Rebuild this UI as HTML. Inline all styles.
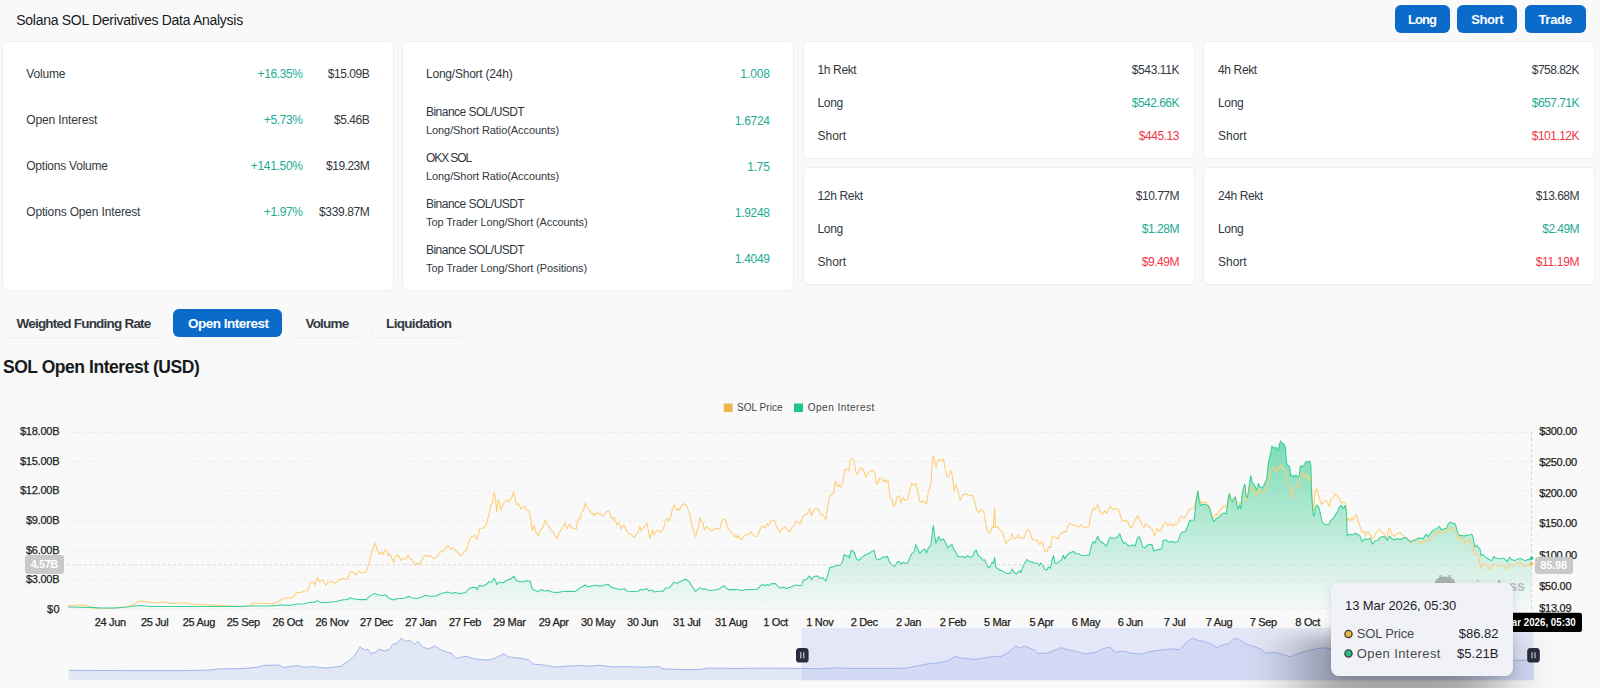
<!DOCTYPE html>
<html lang="en"><head><meta charset="utf-8"><title>Solana SOL Derivatives Data Analysis</title>
<style>
html,body{margin:0;padding:0}
body{width:1600px;height:688px;position:relative;overflow:hidden;background:#f9f9f9;font-family:"Liberation Sans",sans-serif}
.t{position:absolute;white-space:nowrap;line-height:1}
.ax{-webkit-text-stroke:.25px #222}
.card{position:absolute;box-sizing:border-box;background:#fff;border:1px solid #efefef;border-radius:5px}
.btn{position:absolute;background:#0b6bcb;border-radius:6px}
.tab{position:absolute;top:309px;height:28px;border-radius:6px;box-shadow:0 1px 2px rgba(21,21,21,.06)}
svg{position:absolute;left:0;top:0}
.pl{position:absolute;background:#c9c9c9;border-radius:3px}
#tip{position:absolute;left:1330.5px;top:583px;width:182px;height:93px;background:#f1f2f7;border-radius:8px;box-shadow:0 2px 9px rgba(0,0,0,.13)}
</style></head><body>

<div class="card" style="left:2px;top:41px;width:392px;height:250px"></div>
<div class="card" style="left:402px;top:41px;width:392px;height:250px"></div>
<div class="card" style="left:803px;top:41px;width:392px;height:118px"></div>
<div class="card" style="left:1203px;top:41px;width:392px;height:118px"></div>
<div class="card" style="left:803px;top:167px;width:392px;height:118px"></div>
<div class="card" style="left:1203px;top:167px;width:392px;height:118px"></div>
<div class="btn" style="left:1395px;top:5px;width:55px;height:28px"></div>
<div class="btn" style="left:1457.3px;top:5px;width:59.7px;height:28px"></div>
<div class="btn" style="left:1524.5px;top:5px;width:61px;height:28px"></div>
<div class="tab" style="left:2.5px;width:162px;"></div>
<div class="tab" style="left:173.4px;width:108.6px;background:#0b6bcb;box-shadow:none"></div>
<div class="tab" style="left:291px;width:72px;"></div>
<div class="tab" style="left:371.5px;width:93px;"></div>
<svg width="1600" height="688" viewBox="0 0 1600 688">
<defs><linearGradient id="gg" x1="0" y1="0" x2="0" y2="1"><stop offset="0" stop-color="#22c886" stop-opacity=".59"/><stop offset="1" stop-color="#22c886" stop-opacity=".02"/></linearGradient></defs>
<line x1="66.8" x2="1532.5" y1="432.5" y2="432.5" stroke="#ededed" stroke-width="1" stroke-dasharray="3.2 2.2"/>
<line x1="66.8" x2="1532.5" y1="461.8" y2="461.8" stroke="#ededed" stroke-width="1" stroke-dasharray="3.2 2.2"/>
<line x1="66.8" x2="1532.5" y1="491.1" y2="491.1" stroke="#ededed" stroke-width="1" stroke-dasharray="3.2 2.2"/>
<line x1="66.8" x2="1532.5" y1="521.2" y2="521.2" stroke="#ededed" stroke-width="1" stroke-dasharray="3.2 2.2"/>
<line x1="66.8" x2="1532.5" y1="550.8" y2="550.8" stroke="#ededed" stroke-width="1" stroke-dasharray="3.2 2.2"/>
<line x1="66.8" x2="1532.5" y1="579.9" y2="579.9" stroke="#ededed" stroke-width="1" stroke-dasharray="3.2 2.2"/>
<line x1="66.8" x2="1532.5" y1="608.75" y2="608.75" stroke="#ededed" stroke-width="1" stroke-dasharray="3.2 2.2"/>
<rect x="723.8" y="403.5" width="8.8" height="8.6" fill="#e9b94b"/><rect x="794" y="403.5" width="9" height="8.6" fill="#1fc684"/>
<path d="M68.8 670.3 L122.5 670.6 L185.0 670.6 L210.0 670.0 L219.4 668.8 L235.0 668.8 L247.5 668.1 L256.9 667.2 L264.7 665.3 L278.8 665.0 L283.4 667.5 L291.2 666.2 L297.5 665.6 L303.8 667.2 L313.1 666.6 L325.6 668.1 L335.0 666.9 L341.2 666.2 L347.5 661.6 L353.8 656.9 L360.0 646.9 L364.7 650.0 L367.8 649.1 L370.9 653.8 L375.6 652.2 L378.8 649.1 L385.0 651.2 L389.7 649.1 L392.8 644.4 L397.5 642.8 L401.2 638.1 L405.3 641.2 L410.0 640.6 L414.7 644.4 L417.8 641.2 L422.5 646.9 L428.8 649.1 L435.0 645.9 L441.2 650.0 L447.5 652.2 L452.2 653.8 L455.3 658.4 L460.0 657.5 L466.2 656.2 L472.5 658.4 L478.8 659.4 L488.1 660.0 L494.4 658.4 L500.6 655.3 L503.8 653.8 L508.4 656.9 L516.2 657.8 L522.5 658.4 L528.8 660.0 L533.4 664.1 L541.2 664.7 L547.5 665.6 L556.2 667.2 L564.1 666.2 L581.2 665.6 L590.6 666.2 L600.0 665.3 L612.5 666.9 L625.0 666.6 L643.8 667.2 L659.4 666.6 L662.5 668.8 L675.0 669.4 L696.9 669.7 L709.4 668.1 L737.5 668.4 L768.8 668.1 L801.6 668.4 L818.8 668.8 L837.5 667.8 L850.0 668.4 L862.5 668.4 L893.8 668.4 L906.2 668.1 L918.8 665.6 L928.1 663.8 L940.6 662.5 L950.0 660.0 L954.7 656.2 L959.4 657.8 L965.6 658.4 L975.0 659.4 L981.2 658.4 L987.5 657.5 L993.8 656.2 L1000.0 656.9 L1006.2 653.8 L1010.9 650.6 L1015.6 645.9 L1018.8 648.1 L1025.0 645.9 L1029.7 648.1 L1034.4 650.0 L1037.5 653.1 L1047.0 653.3 L1054.0 650.5 L1061.0 647.7 L1068.0 649.8 L1075.0 651.2 L1085.5 654.0 L1096.0 652.2 L1103.0 648.8 L1110.0 647.0 L1115.2 652.2 L1124.0 651.2 L1131.0 653.3 L1141.5 654.0 L1152.0 651.2 L1162.5 649.8 L1173.0 648.8 L1180.0 649.8 L1185.2 643.5 L1192.2 638.2 L1197.5 640.0 L1204.5 641.8 L1211.5 644.2 L1216.8 647.7 L1222.0 645.2 L1229.0 643.5 L1234.2 638.2 L1239.5 640.0 L1246.5 644.2 L1253.5 646.3 L1260.5 648.8 L1265.8 653.3 L1272.8 652.2 L1281.5 654.0 L1290.2 656.8 L1299.0 653.3 L1306.0 651.2 L1316.5 648.8 L1323.5 647.7 L1330.5 648.8 L1355.0 652.2 L1390.0 656.8 L1425.0 659.2 L1460.0 660.3 L1512.5 660.3 L1534.2 660.0 L1534.2 680.3 L68.8 680.3 Z" fill="#e2e7f6"/>
<path d="M68.8 670.3 L122.5 670.6 L185.0 670.6 L210.0 670.0 L219.4 668.8 L235.0 668.8 L247.5 668.1 L256.9 667.2 L264.7 665.3 L278.8 665.0 L283.4 667.5 L291.2 666.2 L297.5 665.6 L303.8 667.2 L313.1 666.6 L325.6 668.1 L335.0 666.9 L341.2 666.2 L347.5 661.6 L353.8 656.9 L360.0 646.9 L364.7 650.0 L367.8 649.1 L370.9 653.8 L375.6 652.2 L378.8 649.1 L385.0 651.2 L389.7 649.1 L392.8 644.4 L397.5 642.8 L401.2 638.1 L405.3 641.2 L410.0 640.6 L414.7 644.4 L417.8 641.2 L422.5 646.9 L428.8 649.1 L435.0 645.9 L441.2 650.0 L447.5 652.2 L452.2 653.8 L455.3 658.4 L460.0 657.5 L466.2 656.2 L472.5 658.4 L478.8 659.4 L488.1 660.0 L494.4 658.4 L500.6 655.3 L503.8 653.8 L508.4 656.9 L516.2 657.8 L522.5 658.4 L528.8 660.0 L533.4 664.1 L541.2 664.7 L547.5 665.6 L556.2 667.2 L564.1 666.2 L581.2 665.6 L590.6 666.2 L600.0 665.3 L612.5 666.9 L625.0 666.6 L643.8 667.2 L659.4 666.6 L662.5 668.8 L675.0 669.4 L696.9 669.7 L709.4 668.1 L737.5 668.4 L768.8 668.1 L801.6 668.4 L818.8 668.8 L837.5 667.8 L850.0 668.4 L862.5 668.4 L893.8 668.4 L906.2 668.1 L918.8 665.6 L928.1 663.8 L940.6 662.5 L950.0 660.0 L954.7 656.2 L959.4 657.8 L965.6 658.4 L975.0 659.4 L981.2 658.4 L987.5 657.5 L993.8 656.2 L1000.0 656.9 L1006.2 653.8 L1010.9 650.6 L1015.6 645.9 L1018.8 648.1 L1025.0 645.9 L1029.7 648.1 L1034.4 650.0 L1037.5 653.1 L1047.0 653.3 L1054.0 650.5 L1061.0 647.7 L1068.0 649.8 L1075.0 651.2 L1085.5 654.0 L1096.0 652.2 L1103.0 648.8 L1110.0 647.0 L1115.2 652.2 L1124.0 651.2 L1131.0 653.3 L1141.5 654.0 L1152.0 651.2 L1162.5 649.8 L1173.0 648.8 L1180.0 649.8 L1185.2 643.5 L1192.2 638.2 L1197.5 640.0 L1204.5 641.8 L1211.5 644.2 L1216.8 647.7 L1222.0 645.2 L1229.0 643.5 L1234.2 638.2 L1239.5 640.0 L1246.5 644.2 L1253.5 646.3 L1260.5 648.8 L1265.8 653.3 L1272.8 652.2 L1281.5 654.0 L1290.2 656.8 L1299.0 653.3 L1306.0 651.2 L1316.5 648.8 L1323.5 647.7 L1330.5 648.8 L1355.0 652.2 L1390.0 656.8 L1425.0 659.2 L1460.0 660.3 L1512.5 660.3 L1534.2 660.0" fill="none" stroke="#8fa6e9" stroke-width="0.8"/>
<rect x="801.6" y="628" width="731.9" height="52.299999999999955" fill="#a9b5f5" fill-opacity=".26"/>
<path d="M68.0 607.0 L80.0 607.2 L95.0 607.5 L100.0 608.0 L115.0 608.0 L127.0 607.0 L135.0 606.0 L141.0 605.5 L150.0 606.5 L170.0 606.4 L200.0 606.5 L220.0 606.6 L240.0 606.5 L250.0 606.0 L270.0 606.0 L279.0 605.3 L280.0 604.7 L285.6 605.2 L291.2 605.2 L296.9 604.1 L304.4 603.8 L310.0 602.2 L314.7 602.2 L317.5 600.6 L320.3 602.2 L325.0 602.8 L330.6 601.9 L336.2 601.5 L341.9 600.0 L347.5 599.6 L350.3 597.8 L354.1 599.1 L358.8 599.6 L366.2 599.6 L370.0 595.9 L374.7 593.4 L377.5 594.8 L382.2 595.5 L385.9 594.8 L388.4 598.1 L393.4 600.0 L398.1 598.5 L401.9 598.5 L406.0 597.8 L408.4 596.2 L411.2 597.8 L416.9 598.5 L421.6 597.2 L425.3 595.3 L430.0 596.2 L435.6 595.9 L441.2 593.4 L447.8 592.1 L452.5 593.4 L455.3 592.5 L460.0 593.8 L465.6 592.5 L469.4 588.4 L472.2 587.2 L475.9 587.4 L477.2 589.7 L479.1 585.4 L482.5 586.3 L486.2 584.6 L489.1 581.6 L491.9 582.2 L493.8 578.4 L495.6 580.3 L496.6 584.6 L499.4 582.2 L503.1 582.8 L506.9 580.3 L511.6 578.4 L513.8 576.2 L516.2 580.3 L520.0 581.8 L523.8 581.8 L526.6 580.7 L530.3 581.2 L532.2 588.8 L535.0 590.6 L537.8 591.6 L541.6 589.7 L544.4 591.0 L548.1 590.6 L551.9 591.9 L557.5 592.5 L563.1 591.6 L568.8 591.2 L574.4 591.6 L578.1 589.7 L579.4 588.1 L583.1 586.2 L585.4 584.8 L587.2 586.8 L590.6 586.2 L595.3 585.3 L600.0 586.2 L604.7 584.9 L608.4 584.4 L611.2 587.2 L615.9 588.5 L620.6 589.6 L624.4 588.7 L627.2 591.3 L633.8 591.5 L638.4 591.3 L640.3 589.4 L643.1 590.0 L646.9 588.5 L648.8 590.9 L651.6 590.0 L654.0 591.9 L658.1 591.3 L662.8 591.3 L665.6 588.1 L669.4 587.8 L672.2 584.4 L674.1 582.1 L676.5 583.4 L679.7 582.1 L682.5 580.2 L685.9 579.3 L689.1 581.6 L691.9 586.2 L694.1 589.1 L695.6 591.5 L697.5 589.6 L699.8 587.6 L702.2 589.1 L705.0 589.1 L709.7 590.4 L714.4 590.0 L719.1 589.1 L721.9 586.8 L724.1 585.9 L726.6 588.1 L728.4 589.6 L735.0 589.6 L737.8 589.4 L741.6 590.6 L746.2 589.6 L751.9 589.4 L756.6 589.2 L759.4 587.2 L762.2 584.4 L765.0 585.7 L766.9 584.4 L768.4 585.7 L771.0 583.8 L775.3 583.4 L777.2 585.7 L780.0 588.1 L783.8 587.2 L786.6 588.5 L790.3 587.2 L795.9 584.9 L799.7 585.7 L801.6 585.3 L803.4 580.2 L806.6 579.3 L809.6 575.9 L811.5 579.7 L813.8 576.5 L817.5 575.9 L820.3 578.4 L823.1 577.8 L825.9 581.0 L827.8 575.0 L829.7 567.5 L834.4 566.6 L836.2 565.2 L840.4 565.6 L842.8 560.9 L844.1 554.4 L846.6 556.2 L848.4 555.7 L849.4 558.1 L850.7 551.6 L852.2 550.2 L854.4 552.5 L856.5 559.1 L858.8 560.4 L862.8 556.6 L865.6 554.7 L868.4 553.8 L871.2 551.9 L874.1 550.4 L875.9 558.4 L877.8 559.8 L880.6 559.0 L883.4 556.6 L885.3 557.5 L887.2 556.0 L889.6 562.2 L891.9 565.0 L894.7 566.5 L897.1 562.2 L899.0 561.2 L900.9 564.6 L903.1 562.2 L905.9 563.5 L907.8 562.8 L909.7 558.4 L911.6 553.8 L914.0 551.9 L915.9 544.4 L917.8 549.1 L920.0 553.4 L922.8 550.0 L924.7 549.1 L926.6 552.8 L928.4 547.8 L930.9 545.3 L932.2 533.1 L933.3 525.6 L934.6 535.0 L935.9 543.4 L937.2 539.7 L938.8 536.5 L940.6 540.6 L943.4 538.8 L945.3 542.5 L947.8 547.8 L950.0 546.2 L951.9 544.4 L953.8 549.1 L956.0 552.8 L957.9 556.6 L960.3 557.1 L962.8 556.6 L965.0 557.5 L967.8 555.6 L970.6 557.5 L972.5 556.6 L974.8 550.9 L976.2 550.0 L978.1 555.2 L980.4 557.1 L982.8 560.3 L984.7 559.8 L986.6 564.1 L988.4 567.8 L990.3 566.5 L992.2 562.2 L993.5 563.5 L994.6 557.5 L995.6 566.9 L997.8 568.8 L1000.6 570.2 L1003.4 571.6 L1006.2 573.4 L1010.0 573.4 L1012.2 569.1 L1014.1 572.5 L1016.6 574.0 L1019.4 570.6 L1020.9 572.5 L1022.8 566.9 L1025.0 562.8 L1026.9 559.4 L1029.7 561.6 L1032.5 562.2 L1035.3 563.1 L1038.1 563.5 L1039.1 565.9 L1040.9 563.1 L1042.8 565.0 L1044.7 569.1 L1046.6 570.2 L1048.4 566.9 L1050.3 568.4 L1052.2 559.4 L1053.5 555.6 L1055.0 563.1 L1056.9 563.5 L1059.7 561.2 L1061.6 559.8 L1063.4 555.2 L1064.8 559.0 L1067.2 554.7 L1070.0 552.8 L1073.4 551.5 L1075.6 553.4 L1078.4 553.8 L1081.2 555.2 L1085.0 555.6 L1089.1 555.1 L1091.0 547.2 L1092.9 541.6 L1094.8 543.4 L1096.6 538.8 L1097.8 536.3 L1099.6 541.0 L1102.2 542.5 L1104.7 544.4 L1106.6 546.2 L1108.4 540.6 L1110.3 537.2 L1112.8 538.4 L1115.4 537.8 L1117.8 536.9 L1119.7 533.7 L1121.6 538.8 L1123.4 543.4 L1125.3 542.5 L1127.8 545.3 L1130.0 546.2 L1132.8 544.8 L1135.2 546.2 L1137.1 538.8 L1139.0 536.5 L1140.9 540.6 L1142.8 547.2 L1144.6 548.1 L1146.9 545.3 L1149.7 544.4 L1151.9 544.5 L1153.8 551.1 L1156.6 550.1 L1159.4 549.2 L1161.6 548.6 L1163.1 540.4 L1165.9 539.8 L1168.8 542.2 L1171.6 541.3 L1174.4 542.6 L1177.8 541.7 L1180.0 535.1 L1181.9 532.3 L1185.6 531.4 L1187.5 526.7 L1189.8 520.5 L1194.1 520.1 L1195.9 503.2 L1197.8 491.1 L1199.1 500.4 L1200.6 505.5 L1203.4 504.2 L1205.9 504.8 L1208.1 505.5 L1210.4 510.8 L1212.2 518.6 L1214.1 521.6 L1216.6 518.2 L1219.0 517.3 L1221.2 514.5 L1224.1 513.0 L1226.5 513.6 L1227.8 501.4 L1229.1 493.9 L1230.6 499.5 L1232.5 501.8 L1234.0 498.6 L1235.3 496.7 L1236.6 502.9 L1237.8 509.2 L1239.6 505.1 L1240.9 508.9 L1242.2 493.9 L1243.8 486.4 L1244.9 484.1 L1246.0 495.8 L1247.5 497.6 L1249.4 484.5 L1250.7 475.5 L1252.2 482.2 L1254.6 485.4 L1256.5 490.1 L1258.4 483.6 L1260.2 487.3 L1262.5 487.9 L1264.8 483.6 L1266.6 478.9 L1268.5 462.0 L1270.0 456.4 L1271.9 446.1 L1273.8 447.9 L1276.0 447.4 L1277.9 450.8 L1279.4 444.2 L1280.7 441.0 L1282.2 443.2 L1284.1 444.2 L1285.4 447.0 L1286.5 462.9 L1288.4 465.8 L1289.7 466.7 L1290.6 476.1 L1292.5 475.1 L1294.0 477.0 L1295.9 474.8 L1297.8 477.4 L1299.1 476.1 L1300.4 465.8 L1302.2 466.7 L1304.1 464.8 L1306.0 461.6 L1307.9 462.0 L1309.8 461.1 L1310.9 465.8 L1311.6 493.9 L1312.8 512.6 L1314.1 516.4 L1315.4 507.0 L1316.9 505.1 L1318.8 507.0 L1320.6 514.5 L1322.1 522.0 L1324.4 523.9 L1327.2 524.8 L1329.1 523.9 L1330.9 520.1 L1333.4 518.6 L1335.6 514.5 L1337.5 511.7 L1339.4 507.0 L1341.2 505.1 L1343.1 508.9 L1345.0 505.5 L1346.3 510.8 L1347.2 536.1 L1349.7 534.2 L1352.5 535.1 L1355.3 533.2 L1358.1 534.8 L1360.0 536.1 L1361.9 541.7 L1364.7 538.9 L1367.5 539.2 L1370.3 538.5 L1372.2 544.1 L1375.0 540.8 L1377.8 540.4 L1380.2 537.4 L1382.5 536.6 L1385.3 537.0 L1387.2 540.4 L1389.6 536.1 L1391.9 538.9 L1394.7 539.8 L1397.5 538.5 L1400.0 539.8 L1402.5 538.5 L1405.0 537.5 L1407.5 539.4 L1410.6 541.9 L1412.5 540.6 L1415.6 539.8 L1418.1 538.1 L1420.6 538.1 L1423.1 539.0 L1425.0 535.6 L1426.5 534.0 L1427.8 536.9 L1430.0 534.4 L1432.5 530.6 L1435.0 529.4 L1437.5 528.1 L1439.4 526.5 L1441.2 529.8 L1443.8 529.0 L1446.9 528.1 L1448.1 523.8 L1450.0 522.2 L1452.5 523.1 L1455.0 523.8 L1456.2 526.9 L1457.5 532.5 L1459.4 535.6 L1462.5 535.6 L1464.4 536.2 L1466.2 535.0 L1468.1 535.6 L1470.0 534.4 L1471.9 534.4 L1473.1 537.5 L1474.0 542.5 L1475.0 546.9 L1476.9 545.2 L1478.1 547.5 L1480.0 548.8 L1481.0 555.6 L1482.5 554.4 L1484.4 556.2 L1486.2 557.8 L1488.1 558.8 L1490.0 560.0 L1491.9 560.6 L1493.8 556.5 L1495.6 558.1 L1498.1 558.5 L1500.0 558.8 L1501.9 558.8 L1503.8 558.1 L1505.6 560.0 L1507.5 561.5 L1509.4 557.2 L1511.2 559.4 L1513.1 560.0 L1515.0 560.6 L1516.9 559.4 L1518.8 559.0 L1520.0 558.1 L1521.9 559.4 L1523.8 560.0 L1525.6 560.6 L1527.5 559.4 L1529.4 559.8 L1531.5 558.1 L1531.5 608.75 L68.0 608.75 Z" fill="url(#gg)"/>
<path d="M68.0 605.8 L76.0 605.2 L84.0 605.0 L89.0 606.5 L94.5 608.5 L105.0 608.3 L117.0 608.0 L127.5 606.5 L135.0 604.0 L138.0 601.8 L141.0 601.0 L146.0 601.8 L150.0 602.0 L157.0 603.0 L161.0 602.2 L165.0 602.0 L170.0 603.5 L178.0 603.0 L184.5 602.5 L190.0 604.0 L200.0 604.5 L210.0 605.0 L220.0 605.5 L230.0 606.0 L240.0 606.5 L250.0 605.5 L253.5 603.0 L260.0 603.2 L265.0 603.5 L272.0 604.0 L278.0 602.0 L281.0 600.0 L283.8 598.7 L287.5 597.8 L292.2 598.1 L296.9 592.5 L300.6 592.5 L303.4 591.2 L308.1 590.6 L310.0 582.8 L313.8 582.2 L314.7 585.0 L317.5 577.5 L319.4 581.2 L323.1 580.3 L325.9 585.4 L327.8 582.2 L332.5 581.8 L335.3 583.1 L338.1 580.3 L342.8 578.4 L345.6 579.4 L347.5 579.0 L350.3 571.5 L353.1 572.2 L355.9 575.2 L358.8 571.3 L362.5 572.8 L366.2 571.9 L369.1 562.5 L371.9 551.2 L375.1 543.2 L377.5 550.3 L379.4 554.1 L381.2 552.2 L383.1 554.6 L385.0 549.8 L386.9 551.2 L388.4 555.9 L389.7 553.5 L392.5 559.7 L393.8 562.5 L395.3 556.9 L398.1 555.0 L400.9 560.2 L403.8 558.4 L406.0 558.8 L407.9 555.0 L409.8 558.8 L412.2 559.7 L415.0 565.3 L416.9 563.4 L419.1 564.4 L421.6 560.6 L425.3 555.0 L428.1 556.9 L430.0 555.4 L433.8 558.8 L436.6 556.9 L441.2 551.2 L444.1 550.3 L447.8 545.6 L450.6 549.0 L453.4 547.9 L457.2 552.2 L460.4 555.6 L462.8 554.1 L464.7 550.9 L466.6 550.3 L468.4 541.9 L471.2 537.2 L475.0 535.3 L476.9 539.6 L479.7 528.8 L483.4 527.8 L486.2 524.6 L489.1 513.8 L490.9 504.4 L492.4 503.4 L493.8 493.1 L495.2 495.0 L496.6 511.9 L498.4 499.7 L501.2 510.0 L504.1 502.5 L506.9 499.7 L508.8 501.6 L511.6 497.8 L513.8 492.2 L516.2 504.4 L518.5 503.4 L520.9 509.1 L524.7 506.2 L526.6 510.4 L529.4 510.9 L532.2 530.6 L534.1 525.0 L535.4 531.6 L538.4 535.9 L540.6 529.7 L542.5 527.8 L545.3 520.3 L547.2 524.1 L550.9 530.2 L552.8 531.6 L556.6 538.5 L559.4 532.5 L562.2 528.4 L565.0 523.1 L566.9 528.8 L569.7 524.1 L571.6 527.8 L574.4 528.4 L576.2 529.1 L578.1 519.4 L579.8 519.0 L581.6 511.9 L583.5 510.9 L585.4 502.5 L587.2 508.1 L589.7 509.6 L591.6 513.8 L593.4 513.4 L594.0 516.0 L596.2 512.8 L600.0 514.3 L603.8 516.0 L606.6 511.5 L609.0 510.9 L612.2 519.0 L614.1 517.5 L616.9 525.0 L618.8 522.2 L621.0 528.8 L624.0 525.0 L626.2 530.6 L629.1 534.0 L631.9 534.8 L634.1 537.6 L636.6 533.4 L638.4 532.5 L639.8 525.9 L640.9 531.0 L644.1 526.9 L646.9 523.1 L648.4 530.6 L649.7 538.1 L651.6 533.4 L652.5 529.7 L654.0 535.3 L656.2 531.0 L659.1 530.6 L660.4 532.5 L663.4 528.8 L665.6 520.3 L667.1 518.4 L668.4 521.2 L670.3 517.5 L672.2 510.0 L674.1 504.4 L676.5 510.4 L678.4 508.1 L679.7 510.4 L681.6 504.8 L684.4 503.8 L687.2 507.2 L690.0 514.7 L691.9 525.0 L693.8 531.6 L695.6 536.8 L697.5 528.8 L698.4 527.8 L699.8 517.5 L701.2 520.9 L702.8 522.2 L704.1 529.7 L706.5 526.9 L708.8 528.4 L711.6 531.2 L714.4 529.1 L717.2 528.4 L720.0 529.1 L721.9 520.3 L723.8 518.8 L725.6 520.9 L727.5 526.9 L730.3 531.0 L733.1 534.8 L734.6 537.2 L735.9 534.8 L737.2 538.1 L738.4 535.9 L741.0 540.0 L743.4 537.2 L745.9 534.0 L748.1 534.8 L750.9 531.9 L753.8 535.9 L757.5 536.2 L759.8 529.7 L762.2 525.9 L765.0 527.8 L766.9 523.5 L768.4 525.6 L771.0 520.9 L774.4 520.3 L776.2 525.9 L779.6 532.5 L781.9 528.8 L784.7 527.2 L787.5 529.7 L789.8 532.1 L792.2 526.9 L794.1 525.9 L795.9 520.9 L800.2 523.7 L803.4 515.6 L807.2 514.1 L809.6 508.5 L811.5 515.6 L813.8 509.6 L816.6 508.1 L819.0 510.4 L821.2 514.7 L823.5 515.6 L825.9 519.8 L827.8 506.2 L829.7 495.9 L831.6 494.1 L833.4 493.5 L835.3 480.9 L837.2 486.6 L839.1 484.7 L840.4 487.1 L842.8 482.8 L844.7 469.7 L847.1 469.1 L849.0 470.6 L850.3 459.4 L852.2 458.4 L854.1 460.3 L855.9 472.5 L857.8 474.4 L859.7 468.8 L862.1 467.8 L864.4 472.5 L865.9 477.2 L867.8 473.4 L870.3 471.2 L873.1 470.3 L875.0 473.1 L876.5 484.4 L878.4 482.5 L879.7 477.8 L881.6 478.4 L883.4 481.6 L885.3 479.7 L886.6 482.5 L888.1 480.6 L890.0 497.5 L891.9 498.4 L893.4 505.9 L895.2 505.0 L897.1 496.6 L899.0 495.6 L900.9 503.1 L902.8 497.5 L904.6 500.3 L907.8 499.4 L909.7 490.0 L911.6 483.4 L914.0 485.3 L915.9 483.4 L917.8 491.9 L920.0 502.2 L922.8 501.2 L924.7 502.2 L926.6 504.1 L928.4 491.9 L930.9 484.4 L932.2 461.9 L933.1 456.2 L934.6 460.9 L935.9 467.5 L937.8 460.9 L939.7 459.1 L941.0 460.9 L943.4 459.1 L945.3 469.4 L947.2 476.9 L949.1 475.9 L950.6 470.3 L952.2 475.0 L954.1 490.9 L956.0 484.4 L957.9 490.9 L960.3 500.3 L962.8 494.7 L965.0 493.8 L967.8 494.7 L970.6 496.0 L972.1 494.7 L974.4 500.3 L976.6 509.7 L978.5 512.9 L980.4 509.7 L981.9 511.0 L983.8 511.6 L985.2 520.0 L986.6 528.4 L988.4 533.1 L990.3 532.8 L992.2 526.6 L993.5 527.5 L994.6 507.8 L995.4 527.5 L997.8 526.6 L1000.2 530.3 L1002.5 532.2 L1004.8 540.6 L1006.2 543.8 L1008.1 540.6 L1010.4 539.3 L1012.2 534.1 L1014.1 538.8 L1016.6 537.8 L1018.4 534.6 L1019.8 538.4 L1022.2 537.8 L1024.6 536.9 L1026.9 529.4 L1028.8 530.3 L1030.2 533.1 L1032.1 538.8 L1034.4 540.2 L1037.2 539.7 L1039.6 544.4 L1041.5 541.6 L1042.8 542.5 L1044.7 551.5 L1047.1 551.9 L1048.4 547.2 L1050.3 547.8 L1052.2 536.9 L1054.1 536.3 L1055.9 537.8 L1057.8 538.8 L1060.2 534.1 L1062.5 533.1 L1064.4 531.2 L1066.2 532.2 L1068.1 525.6 L1070.4 523.4 L1072.8 524.7 L1075.6 526.0 L1078.4 527.1 L1080.9 524.7 L1084.1 527.5 L1086.9 526.9 L1089.1 526.6 L1091.0 514.4 L1093.4 507.8 L1095.3 509.7 L1097.8 504.6 L1100.0 511.6 L1102.8 514.0 L1104.7 510.6 L1106.6 513.4 L1108.4 509.7 L1110.3 506.5 L1112.8 509.7 L1115.0 508.8 L1117.8 509.1 L1119.7 512.5 L1121.6 520.0 L1124.0 520.9 L1126.2 520.4 L1128.5 522.8 L1130.4 527.9 L1132.8 525.6 L1135.6 519.1 L1137.9 515.9 L1139.8 520.0 L1142.2 525.6 L1144.1 527.5 L1145.4 523.8 L1147.8 525.6 L1150.2 527.5 L1151.9 528.6 L1154.7 535.7 L1157.1 528.6 L1159.4 531.4 L1161.6 529.5 L1163.5 524.8 L1165.9 522.6 L1167.8 525.8 L1170.2 523.9 L1172.5 525.8 L1174.8 523.9 L1177.2 524.2 L1179.6 518.2 L1181.5 516.4 L1183.8 518.2 L1186.6 515.4 L1188.4 510.8 L1191.2 508.5 L1194.1 507.9 L1195.9 499.5 L1197.8 491.6 L1199.1 497.6 L1201.0 503.2 L1203.4 502.3 L1205.3 501.8 L1207.2 505.1 L1209.1 506.1 L1210.9 512.6 L1212.8 518.2 L1214.7 517.3 L1216.0 513.6 L1217.9 515.4 L1219.8 510.8 L1222.2 507.9 L1225.0 505.1 L1226.9 508.9 L1228.4 496.7 L1229.5 493.5 L1231.0 497.6 L1232.9 500.4 L1235.3 497.6 L1237.2 503.2 L1239.1 502.3 L1240.9 504.2 L1242.8 492.0 L1244.7 490.5 L1246.6 501.0 L1248.4 493.9 L1250.3 486.4 L1252.2 489.2 L1254.1 492.9 L1256.5 495.4 L1258.4 488.2 L1260.6 492.0 L1263.4 493.5 L1265.3 488.2 L1267.2 484.5 L1269.1 477.9 L1270.9 469.5 L1272.8 467.2 L1275.2 469.5 L1277.1 472.3 L1279.4 466.7 L1280.9 464.8 L1282.2 469.5 L1284.1 469.1 L1285.4 472.3 L1286.9 481.7 L1288.8 486.4 L1290.2 489.2 L1291.0 498.6 L1292.1 492.0 L1294.4 488.2 L1296.2 486.4 L1298.1 487.3 L1299.6 477.0 L1301.5 472.3 L1303.4 474.2 L1304.7 477.0 L1306.6 474.2 L1308.4 480.8 L1309.8 476.6 L1310.9 477.9 L1312.2 495.8 L1313.5 510.8 L1315.0 492.0 L1316.5 488.6 L1317.8 492.0 L1319.7 499.5 L1321.6 504.2 L1323.4 502.3 L1325.3 500.4 L1327.2 501.4 L1329.1 506.1 L1330.9 499.5 L1333.4 497.2 L1335.6 493.9 L1337.5 496.7 L1339.4 498.6 L1341.2 503.2 L1343.1 502.3 L1345.9 502.9 L1347.2 521.1 L1348.8 518.2 L1350.2 521.1 L1352.1 517.3 L1353.4 520.1 L1355.3 515.4 L1356.6 514.5 L1358.1 521.1 L1360.0 525.8 L1361.9 532.3 L1364.1 531.4 L1365.6 536.1 L1367.5 531.4 L1369.8 534.2 L1372.2 538.9 L1374.1 537.0 L1375.9 533.2 L1377.8 531.4 L1379.7 529.5 L1382.1 532.3 L1384.4 534.2 L1386.6 539.8 L1388.5 529.5 L1390.0 528.6 L1391.9 534.2 L1394.7 536.1 L1397.5 533.2 L1400.0 533.1 L1402.5 535.0 L1405.0 537.5 L1407.5 538.1 L1409.4 541.2 L1411.0 543.1 L1412.5 540.6 L1415.0 539.8 L1417.5 539.8 L1419.4 541.9 L1421.2 543.5 L1423.1 541.9 L1425.0 540.6 L1426.9 541.0 L1429.4 540.2 L1431.2 537.5 L1433.1 536.2 L1435.0 534.4 L1436.9 531.9 L1438.1 530.6 L1440.0 532.8 L1441.9 532.2 L1443.8 533.1 L1445.6 531.2 L1448.1 530.0 L1449.4 527.2 L1450.6 529.4 L1452.5 528.1 L1454.4 529.4 L1456.2 534.4 L1457.8 539.4 L1460.0 537.5 L1462.5 538.5 L1464.4 540.0 L1465.2 543.8 L1466.9 540.6 L1468.5 539.4 L1470.0 543.1 L1471.9 545.0 L1473.1 548.1 L1474.4 553.8 L1475.6 555.0 L1477.5 553.8 L1479.0 558.8 L1480.2 565.0 L1481.2 568.8 L1482.2 564.4 L1484.0 563.5 L1486.2 564.0 L1488.1 566.9 L1490.0 568.8 L1491.5 568.1 L1493.1 563.8 L1495.0 564.4 L1496.9 565.0 L1498.8 566.9 L1500.6 565.6 L1502.5 565.0 L1504.4 566.2 L1506.2 569.0 L1507.8 568.1 L1509.4 563.8 L1511.0 564.4 L1512.5 566.2 L1514.4 565.6 L1516.2 564.4 L1518.1 563.1 L1520.0 561.9 L1521.9 563.8 L1523.8 566.2 L1525.6 566.9 L1527.5 565.0 L1529.4 564.4 L1531.5 564.0" fill="none" stroke="#ffcd73" stroke-width="1.05" stroke-linejoin="round"/>
<path d="M68.0 607.0 L80.0 607.2 L95.0 607.5 L100.0 608.0 L115.0 608.0 L127.0 607.0 L135.0 606.0 L141.0 605.5 L150.0 606.5 L170.0 606.4 L200.0 606.5 L220.0 606.6 L240.0 606.5 L250.0 606.0 L270.0 606.0 L279.0 605.3 L280.0 604.7 L285.6 605.2 L291.2 605.2 L296.9 604.1 L304.4 603.8 L310.0 602.2 L314.7 602.2 L317.5 600.6 L320.3 602.2 L325.0 602.8 L330.6 601.9 L336.2 601.5 L341.9 600.0 L347.5 599.6 L350.3 597.8 L354.1 599.1 L358.8 599.6 L366.2 599.6 L370.0 595.9 L374.7 593.4 L377.5 594.8 L382.2 595.5 L385.9 594.8 L388.4 598.1 L393.4 600.0 L398.1 598.5 L401.9 598.5 L406.0 597.8 L408.4 596.2 L411.2 597.8 L416.9 598.5 L421.6 597.2 L425.3 595.3 L430.0 596.2 L435.6 595.9 L441.2 593.4 L447.8 592.1 L452.5 593.4 L455.3 592.5 L460.0 593.8 L465.6 592.5 L469.4 588.4 L472.2 587.2 L475.9 587.4 L477.2 589.7 L479.1 585.4 L482.5 586.3 L486.2 584.6 L489.1 581.6 L491.9 582.2 L493.8 578.4 L495.6 580.3 L496.6 584.6 L499.4 582.2 L503.1 582.8 L506.9 580.3 L511.6 578.4 L513.8 576.2 L516.2 580.3 L520.0 581.8 L523.8 581.8 L526.6 580.7 L530.3 581.2 L532.2 588.8 L535.0 590.6 L537.8 591.6 L541.6 589.7 L544.4 591.0 L548.1 590.6 L551.9 591.9 L557.5 592.5 L563.1 591.6 L568.8 591.2 L574.4 591.6 L578.1 589.7 L579.4 588.1 L583.1 586.2 L585.4 584.8 L587.2 586.8 L590.6 586.2 L595.3 585.3 L600.0 586.2 L604.7 584.9 L608.4 584.4 L611.2 587.2 L615.9 588.5 L620.6 589.6 L624.4 588.7 L627.2 591.3 L633.8 591.5 L638.4 591.3 L640.3 589.4 L643.1 590.0 L646.9 588.5 L648.8 590.9 L651.6 590.0 L654.0 591.9 L658.1 591.3 L662.8 591.3 L665.6 588.1 L669.4 587.8 L672.2 584.4 L674.1 582.1 L676.5 583.4 L679.7 582.1 L682.5 580.2 L685.9 579.3 L689.1 581.6 L691.9 586.2 L694.1 589.1 L695.6 591.5 L697.5 589.6 L699.8 587.6 L702.2 589.1 L705.0 589.1 L709.7 590.4 L714.4 590.0 L719.1 589.1 L721.9 586.8 L724.1 585.9 L726.6 588.1 L728.4 589.6 L735.0 589.6 L737.8 589.4 L741.6 590.6 L746.2 589.6 L751.9 589.4 L756.6 589.2 L759.4 587.2 L762.2 584.4 L765.0 585.7 L766.9 584.4 L768.4 585.7 L771.0 583.8 L775.3 583.4 L777.2 585.7 L780.0 588.1 L783.8 587.2 L786.6 588.5 L790.3 587.2 L795.9 584.9 L799.7 585.7 L801.6 585.3 L803.4 580.2 L806.6 579.3 L809.6 575.9 L811.5 579.7 L813.8 576.5 L817.5 575.9 L820.3 578.4 L823.1 577.8 L825.9 581.0 L827.8 575.0 L829.7 567.5 L834.4 566.6 L836.2 565.2 L840.4 565.6 L842.8 560.9 L844.1 554.4 L846.6 556.2 L848.4 555.7 L849.4 558.1 L850.7 551.6 L852.2 550.2 L854.4 552.5 L856.5 559.1 L858.8 560.4 L862.8 556.6 L865.6 554.7 L868.4 553.8 L871.2 551.9 L874.1 550.4 L875.9 558.4 L877.8 559.8 L880.6 559.0 L883.4 556.6 L885.3 557.5 L887.2 556.0 L889.6 562.2 L891.9 565.0 L894.7 566.5 L897.1 562.2 L899.0 561.2 L900.9 564.6 L903.1 562.2 L905.9 563.5 L907.8 562.8 L909.7 558.4 L911.6 553.8 L914.0 551.9 L915.9 544.4 L917.8 549.1 L920.0 553.4 L922.8 550.0 L924.7 549.1 L926.6 552.8 L928.4 547.8 L930.9 545.3 L932.2 533.1 L933.3 525.6 L934.6 535.0 L935.9 543.4 L937.2 539.7 L938.8 536.5 L940.6 540.6 L943.4 538.8 L945.3 542.5 L947.8 547.8 L950.0 546.2 L951.9 544.4 L953.8 549.1 L956.0 552.8 L957.9 556.6 L960.3 557.1 L962.8 556.6 L965.0 557.5 L967.8 555.6 L970.6 557.5 L972.5 556.6 L974.8 550.9 L976.2 550.0 L978.1 555.2 L980.4 557.1 L982.8 560.3 L984.7 559.8 L986.6 564.1 L988.4 567.8 L990.3 566.5 L992.2 562.2 L993.5 563.5 L994.6 557.5 L995.6 566.9 L997.8 568.8 L1000.6 570.2 L1003.4 571.6 L1006.2 573.4 L1010.0 573.4 L1012.2 569.1 L1014.1 572.5 L1016.6 574.0 L1019.4 570.6 L1020.9 572.5 L1022.8 566.9 L1025.0 562.8 L1026.9 559.4 L1029.7 561.6 L1032.5 562.2 L1035.3 563.1 L1038.1 563.5 L1039.1 565.9 L1040.9 563.1 L1042.8 565.0 L1044.7 569.1 L1046.6 570.2 L1048.4 566.9 L1050.3 568.4 L1052.2 559.4 L1053.5 555.6 L1055.0 563.1 L1056.9 563.5 L1059.7 561.2 L1061.6 559.8 L1063.4 555.2 L1064.8 559.0 L1067.2 554.7 L1070.0 552.8 L1073.4 551.5 L1075.6 553.4 L1078.4 553.8 L1081.2 555.2 L1085.0 555.6 L1089.1 555.1 L1091.0 547.2 L1092.9 541.6 L1094.8 543.4 L1096.6 538.8 L1097.8 536.3 L1099.6 541.0 L1102.2 542.5 L1104.7 544.4 L1106.6 546.2 L1108.4 540.6 L1110.3 537.2 L1112.8 538.4 L1115.4 537.8 L1117.8 536.9 L1119.7 533.7 L1121.6 538.8 L1123.4 543.4 L1125.3 542.5 L1127.8 545.3 L1130.0 546.2 L1132.8 544.8 L1135.2 546.2 L1137.1 538.8 L1139.0 536.5 L1140.9 540.6 L1142.8 547.2 L1144.6 548.1 L1146.9 545.3 L1149.7 544.4 L1151.9 544.5 L1153.8 551.1 L1156.6 550.1 L1159.4 549.2 L1161.6 548.6 L1163.1 540.4 L1165.9 539.8 L1168.8 542.2 L1171.6 541.3 L1174.4 542.6 L1177.8 541.7 L1180.0 535.1 L1181.9 532.3 L1185.6 531.4 L1187.5 526.7 L1189.8 520.5 L1194.1 520.1 L1195.9 503.2 L1197.8 491.1 L1199.1 500.4 L1200.6 505.5 L1203.4 504.2 L1205.9 504.8 L1208.1 505.5 L1210.4 510.8 L1212.2 518.6 L1214.1 521.6 L1216.6 518.2 L1219.0 517.3 L1221.2 514.5 L1224.1 513.0 L1226.5 513.6 L1227.8 501.4 L1229.1 493.9 L1230.6 499.5 L1232.5 501.8 L1234.0 498.6 L1235.3 496.7 L1236.6 502.9 L1237.8 509.2 L1239.6 505.1 L1240.9 508.9 L1242.2 493.9 L1243.8 486.4 L1244.9 484.1 L1246.0 495.8 L1247.5 497.6 L1249.4 484.5 L1250.7 475.5 L1252.2 482.2 L1254.6 485.4 L1256.5 490.1 L1258.4 483.6 L1260.2 487.3 L1262.5 487.9 L1264.8 483.6 L1266.6 478.9 L1268.5 462.0 L1270.0 456.4 L1271.9 446.1 L1273.8 447.9 L1276.0 447.4 L1277.9 450.8 L1279.4 444.2 L1280.7 441.0 L1282.2 443.2 L1284.1 444.2 L1285.4 447.0 L1286.5 462.9 L1288.4 465.8 L1289.7 466.7 L1290.6 476.1 L1292.5 475.1 L1294.0 477.0 L1295.9 474.8 L1297.8 477.4 L1299.1 476.1 L1300.4 465.8 L1302.2 466.7 L1304.1 464.8 L1306.0 461.6 L1307.9 462.0 L1309.8 461.1 L1310.9 465.8 L1311.6 493.9 L1312.8 512.6 L1314.1 516.4 L1315.4 507.0 L1316.9 505.1 L1318.8 507.0 L1320.6 514.5 L1322.1 522.0 L1324.4 523.9 L1327.2 524.8 L1329.1 523.9 L1330.9 520.1 L1333.4 518.6 L1335.6 514.5 L1337.5 511.7 L1339.4 507.0 L1341.2 505.1 L1343.1 508.9 L1345.0 505.5 L1346.3 510.8 L1347.2 536.1 L1349.7 534.2 L1352.5 535.1 L1355.3 533.2 L1358.1 534.8 L1360.0 536.1 L1361.9 541.7 L1364.7 538.9 L1367.5 539.2 L1370.3 538.5 L1372.2 544.1 L1375.0 540.8 L1377.8 540.4 L1380.2 537.4 L1382.5 536.6 L1385.3 537.0 L1387.2 540.4 L1389.6 536.1 L1391.9 538.9 L1394.7 539.8 L1397.5 538.5 L1400.0 539.8 L1402.5 538.5 L1405.0 537.5 L1407.5 539.4 L1410.6 541.9 L1412.5 540.6 L1415.6 539.8 L1418.1 538.1 L1420.6 538.1 L1423.1 539.0 L1425.0 535.6 L1426.5 534.0 L1427.8 536.9 L1430.0 534.4 L1432.5 530.6 L1435.0 529.4 L1437.5 528.1 L1439.4 526.5 L1441.2 529.8 L1443.8 529.0 L1446.9 528.1 L1448.1 523.8 L1450.0 522.2 L1452.5 523.1 L1455.0 523.8 L1456.2 526.9 L1457.5 532.5 L1459.4 535.6 L1462.5 535.6 L1464.4 536.2 L1466.2 535.0 L1468.1 535.6 L1470.0 534.4 L1471.9 534.4 L1473.1 537.5 L1474.0 542.5 L1475.0 546.9 L1476.9 545.2 L1478.1 547.5 L1480.0 548.8 L1481.0 555.6 L1482.5 554.4 L1484.4 556.2 L1486.2 557.8 L1488.1 558.8 L1490.0 560.0 L1491.9 560.6 L1493.8 556.5 L1495.6 558.1 L1498.1 558.5 L1500.0 558.8 L1501.9 558.8 L1503.8 558.1 L1505.6 560.0 L1507.5 561.5 L1509.4 557.2 L1511.2 559.4 L1513.1 560.0 L1515.0 560.6 L1516.9 559.4 L1518.8 559.0 L1520.0 558.1 L1521.9 559.4 L1523.8 560.0 L1525.6 560.6 L1527.5 559.4 L1529.4 559.8 L1531.5 558.1" fill="none" stroke="#38d097" stroke-width="1.05" stroke-linejoin="round"/>
<line x1="66.8" x2="1532.5" y1="564.75" y2="564.75" stroke="#dadada" stroke-width="1.2" stroke-dasharray="3.4 2.2"/>
<line x1="1531.5" x2="1531.5" y1="432" y2="609" stroke="#d9d9d9" stroke-width="1.1" stroke-dasharray="3.4 2.2"/>
<circle cx="1531.5" cy="558.2" r="1.8" fill="#2bcb8d"/><circle cx="1531.5" cy="564" r="1.8" fill="#f5b54a"/>
<rect x="796.0" y="648" width="12.6" height="14.6" rx="3.4" fill="#2a2d3e"/>
<rect x="800.1999999999999" y="652.2" width="1.2" height="6.2" fill="#c9cce0"/><rect x="803.1999999999999" y="652.2" width="1.2" height="6.2" fill="#c9cce0"/>
<rect x="1527.2" y="648" width="12.6" height="14.6" rx="3.4" fill="#2a2d3e"/>
<rect x="1531.4" y="652.2" width="1.2" height="6.2" fill="#c9cce0"/><rect x="1534.4" y="652.2" width="1.2" height="6.2" fill="#c9cce0"/>
<g fill="#a7adab" fill-opacity=".92"><path d="M1434.8 584 C1434.8 579.2 1438.5 576.4 1445 576.4 C1451.500 576.4 1455.2 579.2 1455.2 584 Z"/><rect x="1439.3" y="575" width="2.2" height="2.5" rx=".5"/><rect x="1448.6" y="575" width="2.2" height="2.5" rx=".5"/></g>
<text x="1459" y="590.5" font-family="Liberation Sans, sans-serif" font-weight="700" font-size="15" fill="#b9bbbb" textLength="66" lengthAdjust="spacingAndGlyphs">coinglass</text>
<defs><filter id="tb" filterUnits="userSpaceOnUse" x="1100" y="540" width="560" height="260"><feGaussianBlur stdDeviation="30 8"/></filter></defs><rect x="1300" y="636" width="198" height="90" fill="#000" fill-opacity=".33" filter="url(#tb)"/>
<rect x="1484" y="612.7" width="98" height="19.4" rx="2.5" fill="#000"/>
<text x="1533" y="626.2" text-anchor="middle" font-family="Liberation Sans, sans-serif" font-weight="700" font-size="11" fill="#fff" textLength="85.6" lengthAdjust="spacingAndGlyphs">13 Mar 2026, 05:30</text>
</svg>
<span class="t" id="t0" style="top:13.15px;font-size:14px;color:#171a1c;letter-spacing:-0.284px;left:16.25px;">Solana SOL Derivatives Data Analysis</span>
<span class="t" id="t1" style="top:67.84px;font-size:12px;color:#32383e;letter-spacing:-0.166px;left:26.25px;">Volume</span>
<span class="t" id="t2" style="top:67.84px;font-size:12px;color:#22ab94;letter-spacing:-0.378px;right:1297.38px;">+16.35%</span>
<span class="t" id="t3" style="top:67.84px;font-size:12px;color:#32383e;letter-spacing:-0.461px;right:1230.71px;">$15.09B</span>
<span class="t" id="t4" style="top:114.04px;font-size:12px;color:#32383e;letter-spacing:-0.127px;left:26.25px;">Open Interest</span>
<span class="t" id="t5" style="top:114.04px;font-size:12px;color:#22ab94;letter-spacing:-0.369px;right:1297.37px;">+5.73%</span>
<span class="t" id="t6" style="top:114.04px;font-size:12px;color:#32383e;letter-spacing:-0.469px;right:1230.72px;">$5.46B</span>
<span class="t" id="t7" style="top:160.04px;font-size:12px;color:#32383e;letter-spacing:-0.232px;left:26.25px;">Options Volume</span>
<span class="t" id="t8" style="top:160.04px;font-size:12px;color:#22ab94;letter-spacing:-0.313px;right:1297.31px;">+141.50%</span>
<span class="t" id="t9" style="top:160.04px;font-size:12px;color:#32383e;letter-spacing:-0.501px;right:1230.75px;">$19.23M</span>
<span class="t" id="t10" style="top:206.24px;font-size:12px;color:#32383e;letter-spacing:-0.160px;left:26.25px;">Options Open Interest</span>
<span class="t" id="t11" style="top:206.24px;font-size:12px;color:#22ab94;letter-spacing:-0.369px;right:1297.37px;">+1.97%</span>
<span class="t" id="t12" style="top:206.24px;font-size:12px;color:#32383e;letter-spacing:-0.382px;right:1230.63px;">$339.87M</span>
<span class="t" id="t13" style="top:67.84px;font-size:12px;color:#32383e;letter-spacing:-0.224px;left:426.00px;">Long/Short (24h)</span>
<span class="t" id="t14" style="top:67.84px;font-size:12px;color:#22ab94;letter-spacing:-0.083px;right:830.08px;">1.008</span>
<span class="t" id="t15" style="top:105.54px;font-size:12px;color:#32383e;letter-spacing:-0.535px;left:426.00px;">Binance SOL/USDT</span>
<span class="t" id="t16" style="top:124.69px;font-size:11px;color:#32383e;letter-spacing:-0.082px;left:426.00px;">Long/Short Ratio(Accounts)</span>
<span class="t" id="t17" style="top:115.24px;font-size:12px;color:#22ab94;letter-spacing:-0.301px;right:830.30px;">1.6724</span>
<span class="t" id="t18" style="top:151.54px;font-size:12px;color:#32383e;letter-spacing:-1.081px;left:426.00px;">OKX SOL</span>
<span class="t" id="t19" style="top:170.69px;font-size:11px;color:#32383e;letter-spacing:-0.082px;left:426.00px;">Long/Short Ratio(Accounts)</span>
<span class="t" id="t20" style="top:161.24px;font-size:12px;color:#22ab94;letter-spacing:-0.220px;right:830.22px;">1.75</span>
<span class="t" id="t21" style="top:197.64px;font-size:12px;color:#32383e;letter-spacing:-0.535px;left:426.00px;">Binance SOL/USDT</span>
<span class="t" id="t22" style="top:216.79px;font-size:11px;color:#32383e;letter-spacing:-0.113px;left:426.00px;">Top Trader Long/Short (Accounts)</span>
<span class="t" id="t23" style="top:207.34px;font-size:12px;color:#22ab94;letter-spacing:-0.301px;right:830.30px;">1.9248</span>
<span class="t" id="t24" style="top:243.64px;font-size:12px;color:#32383e;letter-spacing:-0.535px;left:426.00px;">Binance SOL/USDT</span>
<span class="t" id="t25" style="top:262.79px;font-size:11px;color:#32383e;letter-spacing:-0.106px;left:426.00px;">Top Trader Long/Short (Positions)</span>
<span class="t" id="t26" style="top:253.34px;font-size:12px;color:#22ab94;letter-spacing:-0.301px;right:830.30px;">1.4049</span>
<span class="t" id="t27" style="top:64.24px;font-size:12px;color:#32383e;letter-spacing:-0.360px;left:817.50px;">1h Rekt</span>
<span class="t" id="t28" style="top:64.24px;font-size:12px;color:#32383e;letter-spacing:-0.400px;right:420.90px;">$543.11K</span>
<span class="t" id="t29" style="top:97.24px;font-size:12px;color:#32383e;letter-spacing:-0.334px;left:817.50px;">Long</span>
<span class="t" id="t30" style="top:97.24px;font-size:12px;color:#22ab94;letter-spacing:-0.527px;right:421.03px;">$542.66K</span>
<span class="t" id="t31" style="top:130.24px;font-size:12px;color:#32383e;letter-spacing:0.003px;left:817.50px;">Short</span>
<span class="t" id="t32" style="top:130.24px;font-size:12px;color:#f23645;letter-spacing:-0.448px;right:420.95px;">$445.13</span>
<span class="t" id="t33" style="top:64.24px;font-size:12px;color:#32383e;letter-spacing:-0.360px;left:1218.00px;">4h Rekt</span>
<span class="t" id="t34" style="top:64.24px;font-size:12px;color:#32383e;letter-spacing:-0.527px;right:21.03px;">$758.82K</span>
<span class="t" id="t35" style="top:97.24px;font-size:12px;color:#32383e;letter-spacing:-0.334px;left:1218.00px;">Long</span>
<span class="t" id="t36" style="top:97.24px;font-size:12px;color:#22ab94;letter-spacing:-0.527px;right:21.03px;">$657.71K</span>
<span class="t" id="t37" style="top:130.24px;font-size:12px;color:#32383e;letter-spacing:0.003px;left:1218.00px;">Short</span>
<span class="t" id="t38" style="top:130.24px;font-size:12px;color:#f23645;letter-spacing:-0.527px;right:21.03px;">$101.12K</span>
<span class="t" id="t39" style="top:189.84px;font-size:12px;color:#32383e;letter-spacing:-0.333px;left:817.50px;">12h Rekt</span>
<span class="t" id="t40" style="top:189.84px;font-size:12px;color:#32383e;letter-spacing:-0.501px;right:421.00px;">$10.77M</span>
<span class="t" id="t41" style="top:222.84px;font-size:12px;color:#32383e;letter-spacing:-0.334px;left:817.50px;">Long</span>
<span class="t" id="t42" style="top:222.84px;font-size:12px;color:#22ab94;letter-spacing:-0.466px;right:420.97px;">$1.28M</span>
<span class="t" id="t43" style="top:255.84px;font-size:12px;color:#32383e;letter-spacing:0.003px;left:817.50px;">Short</span>
<span class="t" id="t44" style="top:255.84px;font-size:12px;color:#f23645;letter-spacing:-0.466px;right:420.97px;">$9.49M</span>
<span class="t" id="t45" style="top:189.84px;font-size:12px;color:#32383e;letter-spacing:-0.404px;left:1218.00px;">24h Rekt</span>
<span class="t" id="t46" style="top:189.84px;font-size:12px;color:#32383e;letter-spacing:-0.501px;right:21.00px;">$13.68M</span>
<span class="t" id="t47" style="top:222.84px;font-size:12px;color:#32383e;letter-spacing:-0.334px;left:1218.00px;">Long</span>
<span class="t" id="t48" style="top:222.84px;font-size:12px;color:#22ab94;letter-spacing:-0.566px;right:21.07px;">$2.49M</span>
<span class="t" id="t49" style="top:255.84px;font-size:12px;color:#32383e;letter-spacing:0.003px;left:1218.00px;">Short</span>
<span class="t" id="t50" style="top:255.84px;font-size:12px;color:#f23645;letter-spacing:-0.352px;right:20.85px;">$11.19M</span>
<span class="t" id="t51" style="top:13.30px;font-size:13px;color:#fff;font-weight:700;letter-spacing:-0.989px;left:1422.01px;transform:translateX(-50%);">Long</span>
<span class="t" id="t52" style="top:13.30px;font-size:13px;color:#fff;font-weight:700;letter-spacing:-0.413px;left:1487.19px;transform:translateX(-50%);">Short</span>
<span class="t" id="t53" style="top:13.30px;font-size:13px;color:#fff;font-weight:700;letter-spacing:-0.297px;left:1555.05px;transform:translateX(-50%);">Trade</span>
<span class="t" id="t54" style="top:317.27px;font-size:13.5px;color:#32383e;font-weight:700;letter-spacing:-0.783px;left:16.50px;">Weighted Funding Rate</span>
<span class="t" id="t55" style="top:317.27px;font-size:13.5px;color:#fff;font-weight:700;letter-spacing:-0.515px;left:188.10px;">Open Interest</span>
<span class="t" id="t56" style="top:317.27px;font-size:13.5px;color:#32383e;font-weight:700;letter-spacing:-0.763px;left:305.40px;">Volume</span>
<span class="t" id="t57" style="top:317.27px;font-size:13.5px;color:#32383e;font-weight:700;letter-spacing:-0.688px;left:386.10px;">Liquidation</span>
<span class="t" id="t58" style="top:358.79px;font-size:17.5px;color:#171a1c;font-weight:700;letter-spacing:-0.457px;left:3.00px;">SOL Open Interest (USD)</span>
<span class="t" id="t59" style="top:403.14px;font-size:10px;color:#444;letter-spacing:0.037px;left:737.00px;">SOL Price</span>
<span class="t" id="t60" style="top:403.14px;font-size:10px;color:#444;letter-spacing:0.492px;left:807.75px;">Open Interest</span>
<span class="t ax" id="t61" style="top:425.99px;font-size:11px;color:#222;letter-spacing:-0.247px;right:1540.75px;">$18.00B</span>
<span class="t ax" id="t62" style="top:455.99px;font-size:11px;color:#222;letter-spacing:-0.247px;right:1540.75px;">$15.00B</span>
<span class="t ax" id="t63" style="top:485.29px;font-size:11px;color:#222;letter-spacing:-0.247px;right:1540.75px;">$12.00B</span>
<span class="t ax" id="t64" style="top:515.39px;font-size:11px;color:#222;letter-spacing:-0.255px;right:1540.76px;">$9.00B</span>
<span class="t ax" id="t65" style="top:544.99px;font-size:11px;color:#222;letter-spacing:-0.255px;right:1540.76px;">$6.00B</span>
<span class="t ax" id="t66" style="top:574.09px;font-size:11px;color:#222;letter-spacing:-0.255px;right:1540.76px;">$3.00B</span>
<span class="t ax" id="t67" style="top:603.64px;font-size:11px;color:#222;letter-spacing:0.350px;right:1540.15px;">$0</span>
<span class="t ax" id="t68" style="top:425.99px;font-size:11px;color:#222;letter-spacing:-0.311px;left:1539.20px;">$300.00</span>
<span class="t ax" id="t69" style="top:457.39px;font-size:11px;color:#222;letter-spacing:-0.311px;left:1539.20px;">$250.00</span>
<span class="t ax" id="t70" style="top:488.09px;font-size:11px;color:#222;letter-spacing:-0.311px;left:1539.20px;">$200.00</span>
<span class="t ax" id="t71" style="top:518.49px;font-size:11px;color:#222;letter-spacing:-0.311px;left:1539.20px;">$150.00</span>
<span class="t ax" id="t72" style="top:549.59px;font-size:11px;color:#222;letter-spacing:-0.311px;left:1539.20px;">$100.00</span>
<span class="t ax" id="t73" style="top:580.59px;font-size:11px;color:#222;letter-spacing:-0.251px;left:1539.20px;">$50.00</span>
<span class="t ax" id="t74" style="top:603.49px;font-size:11px;color:#222;letter-spacing:-0.251px;left:1539.20px;">$13.09</span>
<span class="t ax" id="t75" style="top:616.89px;font-size:11px;color:#222;letter-spacing:-0.330px;left:110.23px;transform:translateX(-50%);">24 Jun</span>
<span class="t ax" id="t76" style="top:616.89px;font-size:11px;color:#222;letter-spacing:-0.330px;left:154.59px;transform:translateX(-50%);">25 Jul</span>
<span class="t ax" id="t77" style="top:616.89px;font-size:11px;color:#222;letter-spacing:-0.330px;left:198.94px;transform:translateX(-50%);">25 Aug</span>
<span class="t ax" id="t78" style="top:616.89px;font-size:11px;color:#222;letter-spacing:-0.330px;left:243.29px;transform:translateX(-50%);">25 Sep</span>
<span class="t ax" id="t79" style="top:616.89px;font-size:11px;color:#222;letter-spacing:-0.330px;left:287.63px;transform:translateX(-50%);">26 Oct</span>
<span class="t ax" id="t80" style="top:616.89px;font-size:11px;color:#222;letter-spacing:-0.330px;left:331.98px;transform:translateX(-50%);">26 Nov</span>
<span class="t ax" id="t81" style="top:616.89px;font-size:11px;color:#222;letter-spacing:-0.330px;left:376.33px;transform:translateX(-50%);">27 Dec</span>
<span class="t ax" id="t82" style="top:616.89px;font-size:11px;color:#222;letter-spacing:-0.330px;left:420.69px;transform:translateX(-50%);">27 Jan</span>
<span class="t ax" id="t83" style="top:616.89px;font-size:11px;color:#222;letter-spacing:-0.330px;left:465.04px;transform:translateX(-50%);">27 Feb</span>
<span class="t ax" id="t84" style="top:616.89px;font-size:11px;color:#222;letter-spacing:-0.330px;left:509.39px;transform:translateX(-50%);">29 Mar</span>
<span class="t ax" id="t85" style="top:616.89px;font-size:11px;color:#222;letter-spacing:-0.330px;left:553.74px;transform:translateX(-50%);">29 Apr</span>
<span class="t ax" id="t86" style="top:616.89px;font-size:11px;color:#222;letter-spacing:-0.330px;left:598.09px;transform:translateX(-50%);">30 May</span>
<span class="t ax" id="t87" style="top:616.89px;font-size:11px;color:#222;letter-spacing:-0.330px;left:642.44px;transform:translateX(-50%);">30 Jun</span>
<span class="t ax" id="t88" style="top:616.89px;font-size:11px;color:#222;letter-spacing:-0.330px;left:686.79px;transform:translateX(-50%);">31 Jul</span>
<span class="t ax" id="t89" style="top:616.89px;font-size:11px;color:#222;letter-spacing:-0.330px;left:731.13px;transform:translateX(-50%);">31 Aug</span>
<span class="t ax" id="t90" style="top:616.89px;font-size:11px;color:#222;letter-spacing:-0.330px;left:775.49px;transform:translateX(-50%);">1 Oct</span>
<span class="t ax" id="t91" style="top:616.89px;font-size:11px;color:#222;letter-spacing:-0.330px;left:819.84px;transform:translateX(-50%);">1 Nov</span>
<span class="t ax" id="t92" style="top:616.89px;font-size:11px;color:#222;letter-spacing:-0.330px;left:864.19px;transform:translateX(-50%);">2 Dec</span>
<span class="t ax" id="t93" style="top:616.89px;font-size:11px;color:#222;letter-spacing:-0.330px;left:908.54px;transform:translateX(-50%);">2 Jan</span>
<span class="t ax" id="t94" style="top:616.89px;font-size:11px;color:#222;letter-spacing:-0.330px;left:952.88px;transform:translateX(-50%);">2 Feb</span>
<span class="t ax" id="t95" style="top:616.89px;font-size:11px;color:#222;letter-spacing:-0.330px;left:997.24px;transform:translateX(-50%);">5 Mar</span>
<span class="t ax" id="t96" style="top:616.89px;font-size:11px;color:#222;letter-spacing:-0.330px;left:1041.59px;transform:translateX(-50%);">5 Apr</span>
<span class="t ax" id="t97" style="top:616.89px;font-size:11px;color:#222;letter-spacing:-0.330px;left:1085.94px;transform:translateX(-50%);">6 May</span>
<span class="t ax" id="t98" style="top:616.89px;font-size:11px;color:#222;letter-spacing:-0.330px;left:1130.29px;transform:translateX(-50%);">6 Jun</span>
<span class="t ax" id="t99" style="top:616.89px;font-size:11px;color:#222;letter-spacing:-0.330px;left:1174.64px;transform:translateX(-50%);">7 Jul</span>
<span class="t ax" id="t100" style="top:616.89px;font-size:11px;color:#222;letter-spacing:-0.330px;left:1218.99px;transform:translateX(-50%);">7 Aug</span>
<span class="t ax" id="t101" style="top:616.89px;font-size:11px;color:#222;letter-spacing:-0.330px;left:1263.34px;transform:translateX(-50%);">7 Sep</span>
<span class="t ax" id="t102" style="top:616.89px;font-size:11px;color:#222;letter-spacing:-0.330px;left:1307.69px;transform:translateX(-50%);">8 Oct</span>
<div class="pl" style="left:25px;top:555px;width:39px;height:19px"></div><div class="pl" style="left:1535px;top:556.5px;width:37.5px;height:17.5px"></div>
<span class="t" id="t103" style="top:559.09px;font-size:11px;color:#fff;font-weight:700;letter-spacing:-0.440px;left:44.28px;transform:translateX(-50%);">4.57B</span>
<span class="t" id="t104" style="top:559.89px;font-size:11px;color:#fff;font-weight:700;letter-spacing:-0.108px;left:1553.65px;transform:translateX(-50%);">85.98</span>
<div id="tip"></div>
<span class="t" id="t105" style="top:599.00px;font-size:13px;color:#1d1d1f;letter-spacing:-0.085px;left:1345.00px;">13 Mar 2026, 05:30</span>
<span class="t" id="t106" style="top:627.40px;font-size:13px;color:#4a4a4a;letter-spacing:-0.158px;left:1356.80px;">SOL Price</span>
<span class="t" id="t107" style="top:627.40px;font-size:13px;color:#1d1d1f;letter-spacing:-0.013px;right:101.61px;">$86.82</span>
<span class="t" id="t108" style="top:646.80px;font-size:13px;color:#4a4a4a;letter-spacing:0.402px;left:1356.80px;">Open Interest</span>
<span class="t" id="t109" style="top:646.80px;font-size:13px;color:#1d1d1f;letter-spacing:0.039px;right:101.56px;">$5.21B</span>
<svg width="1600" height="688" viewBox="0 0 1600 688" style="pointer-events:none"><circle cx="1348.5" cy="634" r="3.6" fill="#ecb745" stroke="#3a3a3a" stroke-width="1.3"/><circle cx="1348.5" cy="653.5" r="3.6" fill="#24c381" stroke="#3a3a3a" stroke-width="1.3"/></svg>
</body></html>
